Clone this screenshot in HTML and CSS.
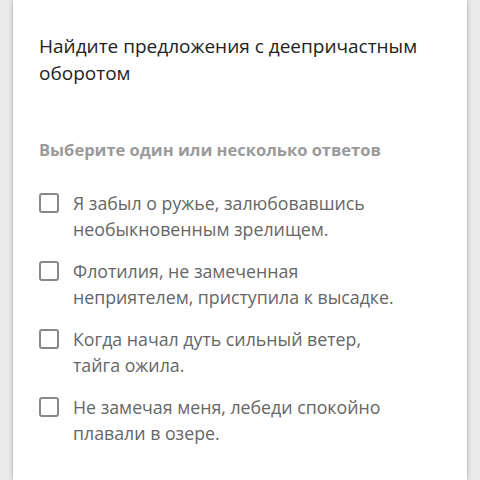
FILE: index.html
```html
<html lang="ru">
<head>
  <meta charset="UTF-8" />
  <meta name="viewport" content="width=device-width, initial-scale=1.0" />
  <title>Тест</title>
  <link rel="stylesheet" href="styles.css">
</head>
<body>
  <div class="card">
    <h1 class="question">Найдите предложения с деепричастным оборотом</h1>
    <p class="hint">Выберите один или несколько ответов</p>
    <div class="answers">
      <label class="answer"><span class="box"></span><span class="text">Я забыл о ружье, залюбовавшись необыкновенным зрелищем.</span></label>
      <label class="answer"><span class="box"></span><span class="text">Флотилия, не замеченная неприятелем, приступила к высадке.</span></label>
      <label class="answer"><span class="box"></span><span class="text">Когда начал дуть сильный ветер,<br>тайга ожила.</span></label>
      <label class="answer"><span class="box"></span><span class="text">Не замечая меня, лебеди спокойно плавали в озере.</span></label>
    </div>
  </div>
</body>
</html>
```

FILE: styles.css
```css
body {
  margin: 0;
  background: #ececec;
  font-family: 'Open Sans', sans-serif;
  height: 100vh;
  overflow: hidden;
}
.card {
  background: white;
  margin: 0 13px;
  min-height: 100vh;
  padding: 33px 26px 0;
  box-shadow: 0 0 5px rgba(0, 0, 0, 0.3);
  box-sizing: border-box;
}
.question {
  font-size: 19px;
  font-weight: normal;
  line-height: 27px;
  color: #222;
  margin: 0;
}
.hint {
  font-size: 16.5px;
  font-weight: bold;
  color: #9a9a9a;
  margin: 52px 0 0;
  line-height: 22px;
}
.answers {
  margin-top: 29px;
  display: flex;
  flex-direction: column;
  gap: 16px;
  padding-right: 18px;
}
.answer {
  display: flex;
  align-items: flex-start;
  gap: 14px;
  font-size: 17.75px;
  line-height: 26px;
  color: #666;
}
.box {
  flex: none;
  width: 16px;
  height: 16px;
  border: 2px solid #888;
  border-radius: 3px;
  margin-top: 3px;
}
```
